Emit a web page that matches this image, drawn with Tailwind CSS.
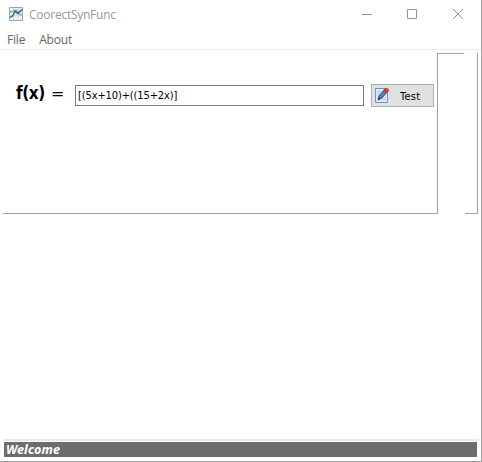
<!DOCTYPE html>
<html lang="en"><head><meta charset="utf-8"><title>CoorectSynFunc</title>
<script src="https://cdn.jsdelivr.net/npm/@tailwindcss/browser@4"></script></head>
<body class="overflow-hidden bg-white">
<div class="flex h-[462px] w-[482px] flex-col border-r border-b border-[#a0a0a0] bg-white whitespace-nowrap">
  <header class="flex h-[29px] shrink-0 items-center pl-[9px]">
    <svg class="mb-[2px] h-[14px] w-[14px] shrink-0" viewBox="0 0 14 14" fill="none">
      <path d="M.5.5h13v13H.5z" fill="#edf3fa" stroke="#98a5bd"/>
      <path d="M1 4.500h12M1 8.500h12M4.500 1v12M9.500 1v12" stroke="#c3d0e3" stroke-width=".7"/>
      <path d="M1 5.500 4 4l3-1 3 4 3 1" stroke="#79a865" stroke-width="1.3"/>
      <path d="M1 10.500 3.500 9 6 4.500l3 2L13 2.500" stroke="#2d6288" stroke-width="1.4"/>
    </svg>
    <h1 class="mt-px ml-[6px] font-['Open_Sans','Noto_Sans',sans-serif] text-[12px] leading-[16px] tracking-[-0.25px] text-[#999]">CoorectSynFunc</h1>
    <svg class="mr-[15px] mb-px ml-auto h-[14px] w-[104px]" viewBox="0 0 104 14" fill="none" stroke="#969696">
      <path d="M0 7.500h10M45.500 2.500h9v9h-9zM91 2l10 10M101 2 91 12"/>
    </svg>
  </header>
  <nav class="flex h-[20px] shrink-0 items-center gap-[14px] pl-[7px] pt-[2px] font-['Open_Sans','Noto_Sans',sans-serif] text-[12px] leading-[16px] tracking-[-0.2px] text-[#666]">
    <span>File</span><span>About</span>
  </nav>
  <main class="flex h-[165px] shrink-0 border-t border-[#ececec] pl-[3px]">
    <section class="flex w-[434px] shrink-0 items-start border-b border-[#a0a0a0] pt-[34px] font-['Noto_Sans',sans-serif]">
      <div class="ml-[13px] flex w-[59px] shrink-0 gap-[4px] text-[16px] leading-[19px] text-black"><b class="w-[31px] font-['DejaVu_Sans_Condensed','DejaVu_Sans',sans-serif] text-[17px] tracking-[-0.4px]">f(x)</b><span class="font-['DejaVu_Sans',sans-serif] text-[16px]">=</span></div>
      <div class="mt-px flex h-[21px] w-[289px] shrink-0 items-center border border-[#7a7a7a] bg-white pt-px pl-[2px] font-['DejaVu_Sans_Condensed','DejaVu_Sans',sans-serif] text-[11px] tracking-[-0.12px] text-black">[(5x+10)+((15+2x)]</div>
      <button class="ml-[7px] flex h-[23px] w-[63px] shrink-0 items-center border border-[#adadad] bg-[#e1e1e1] pl-[3px] text-[11px] text-black">
        <svg class="h-[17px] w-[15px] shrink-0" viewBox="0 0 15 17" fill="none">
          <path d="M.5 1.500h12v14H.5z" fill="#dceafa" stroke="#7893bc"/>
          <path d="M2 5h7M2 8h4M7 12h4" stroke="#a6bedf"/>
          <path d="m3 13 1-4 6-7 3 2-6 7z" fill="#4c82bd" stroke="#263d61" stroke-width=".8"/>
          <path d="m8.500 3.500 2-2.500 3.500 2-2.300 3z" fill="#d33837" stroke="#bd3034" stroke-width=".6"/>
          <path d="m3 13 .7-2.300 1.500 1.200z" fill="#222"/>
        </svg>
        <span class="mt-[3px] ml-[10px] font-['DejaVu_Sans_Condensed','DejaVu_Sans',sans-serif] tracking-[0.3px]">Test</span>
      </button>
    </section>
    <aside class="mt-[3px] flex h-[161px] w-[41px] justify-between border-r border-l border-[#a0a0a0]">
      <div class="w-[26px] border-t border-[#a0a0a0]"></div>
      <div class="w-[12px] border-b border-[#a0a0a0]"></div>
    </aside>
  </main>
  <div class="flex-1"></div>
  <footer class="ml-[3px] h-[22px] w-[475px] shrink-0 border-t-[2px] border-[#e9e9e9] pt-px pl-px">
    <div class="flex h-[15px] w-[473px] items-center bg-[#6d6d6d] pl-[2px] font-['Noto_Sans',sans-serif] text-[12.5px] leading-[15px] font-bold tracking-[0.1px] text-white italic">Welcome</div>
  </footer>
</div></body></html>
